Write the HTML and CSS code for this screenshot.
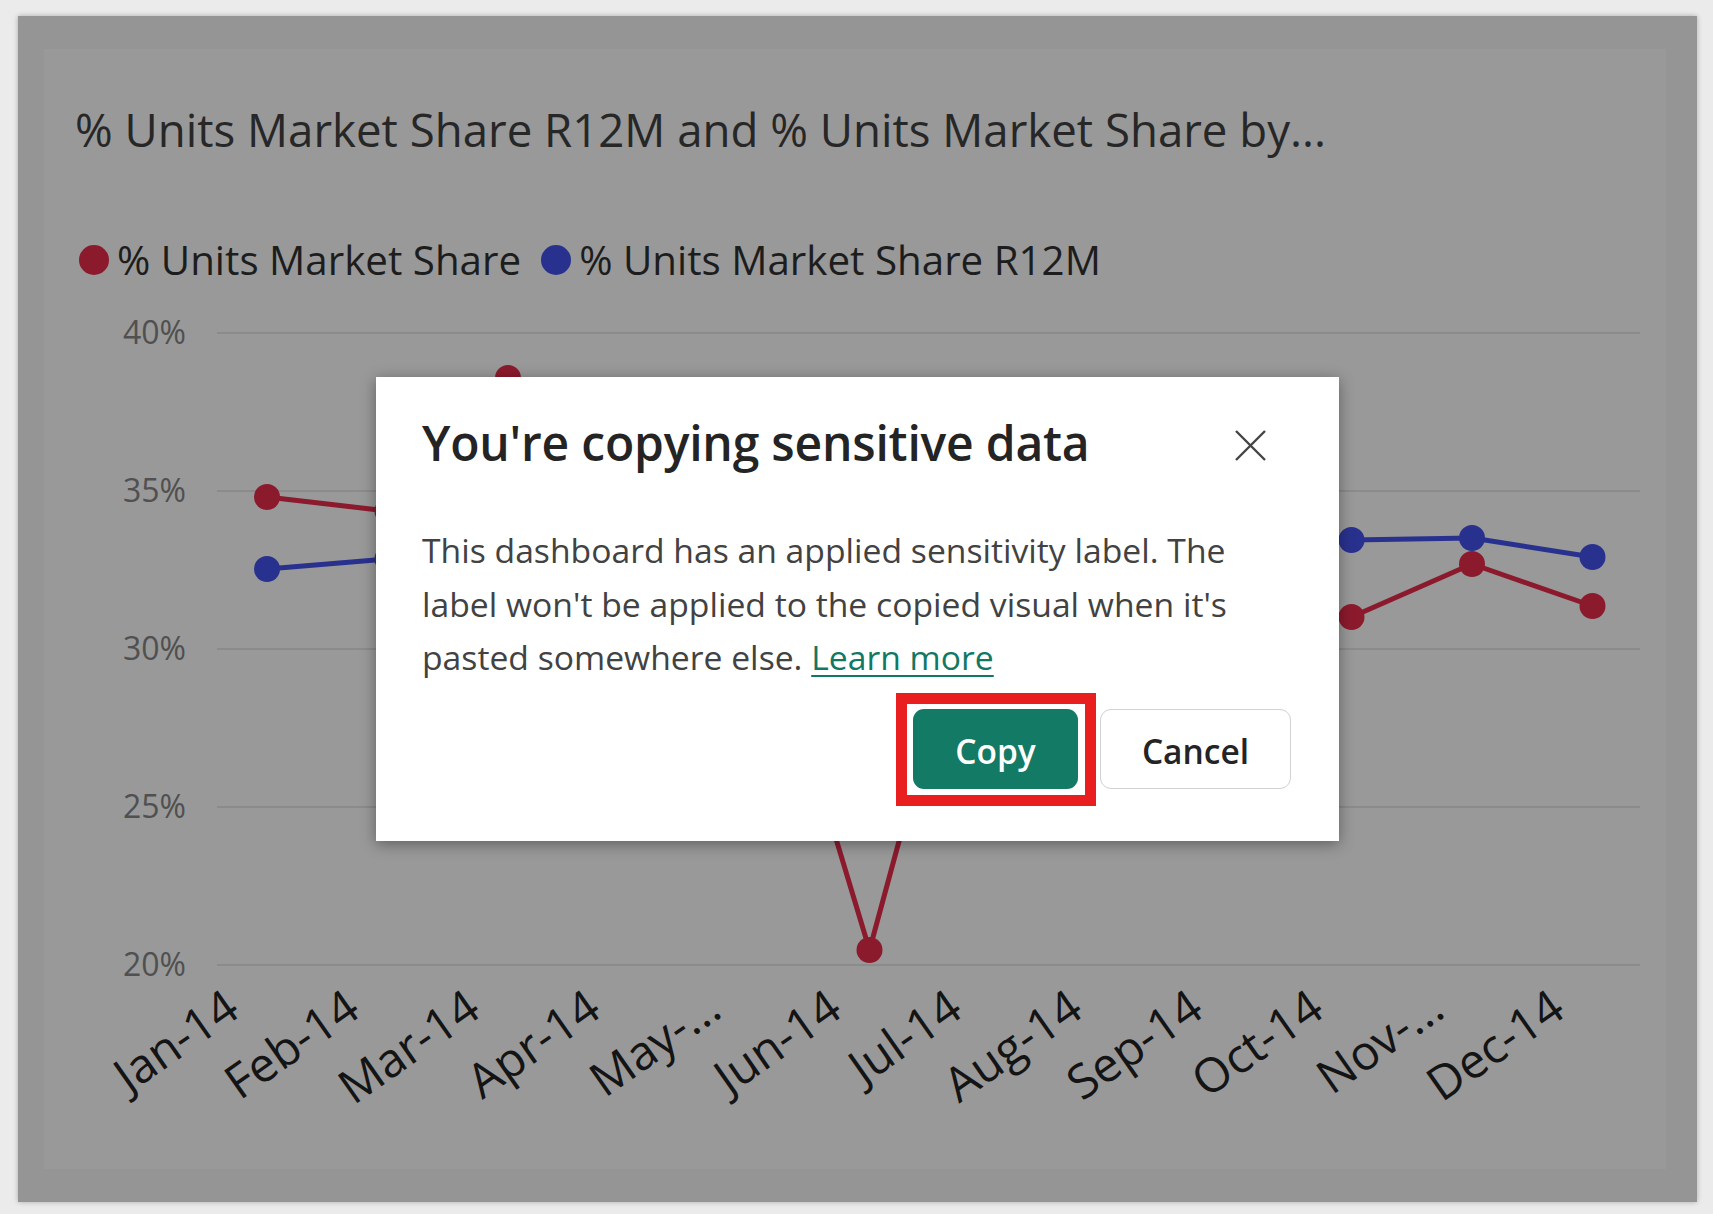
FILE: index.html
```html
<!DOCTYPE html>
<html lang="en">
<head>
<meta charset="utf-8">
<title>Copy visual</title>
<link rel="stylesheet" href="styles.css">
</head>
<body>
<div class="card">
  <div class="visual">
    <h1 class="vtitle">% Units Market Share R12M and % Units Market Share by...</h1>
    <div class="legend">
      <span class="dot dot-red"></span><span class="ltext">% Units Market Share</span>
      <span class="dot dot-blue"></span><span class="ltext">% Units Market Share R12M</span>
    </div>
    <svg class="plot" viewBox="44 285 1622 884" width="1622" height="884" xmlns="http://www.w3.org/2000/svg">
      <g class="grid">
        <line x1="217" x2="1640" y1="333" y2="333"/>
        <line x1="217" x2="1640" y1="491" y2="491"/>
        <line x1="217" x2="1640" y1="649" y2="649"/>
        <line x1="217" x2="1640" y1="807" y2="807"/>
        <line x1="217" x2="1640" y1="965" y2="965"/>
      </g>
      <g class="ylab">
        <text x="186" y="344">40%</text>
        <text x="186" y="502">35%</text>
        <text x="186" y="660">30%</text>
        <text x="186" y="818">25%</text>
        <text x="186" y="976">20%</text>
      </g>
      <g class="series red">
        <polyline points="267,497 387.5,511 508,378 628.5,430 749,550 869.5,950 990,506 1110.5,520 1231,600 1351.5,617 1472,564 1592.5,606"/>
        <circle cx="267" cy="497" r="13"/><circle cx="387.5" cy="511" r="13"/><circle cx="508" cy="378" r="13"/>
        <circle cx="628.5" cy="430" r="13"/><circle cx="749" cy="550" r="13"/><circle cx="869.5" cy="950" r="13"/>
        <circle cx="990" cy="506" r="13"/><circle cx="1110.5" cy="520" r="13"/><circle cx="1231" cy="600" r="13"/>
        <circle cx="1351.5" cy="617" r="13"/><circle cx="1472" cy="564" r="13"/><circle cx="1592.5" cy="606" r="13"/>
      </g>
      <g class="series blue">
        <polyline points="267,569 387.5,559 508,555 628.5,552 749,550 869.5,548 990,545 1110.5,543 1231,541 1351.5,540 1472,538 1592.5,557"/>
        <circle cx="267" cy="569" r="13"/><circle cx="387.5" cy="559" r="13"/><circle cx="508" cy="555" r="13"/>
        <circle cx="628.5" cy="552" r="13"/><circle cx="749" cy="550" r="13"/><circle cx="869.5" cy="548" r="13"/>
        <circle cx="990" cy="545" r="13"/><circle cx="1110.5" cy="543" r="13"/><circle cx="1231" cy="541" r="13"/>
        <circle cx="1351.5" cy="540" r="13"/><circle cx="1472" cy="538" r="13"/><circle cx="1592.5" cy="557" r="13"/>
      </g>
      <g class="xlab">
        <text x="242" y="1015" transform="rotate(-35 242 1015)">Jan-14</text>
        <text x="362.5" y="1015" transform="rotate(-35 362.5 1015)">Feb-14</text>
        <text x="483" y="1015" transform="rotate(-35 483 1015)">Mar-14</text>
        <text x="603.5" y="1015" transform="rotate(-35 603.5 1015)">Apr-14</text>
        <text x="724" y="1015" transform="rotate(-35 724 1015)">May-...</text>
        <text x="844.5" y="1015" transform="rotate(-35 844.5 1015)">Jun-14</text>
        <text x="965" y="1015" transform="rotate(-35 965 1015)">Jul-14</text>
        <text x="1085.5" y="1015" transform="rotate(-35 1085.5 1015)">Aug-14</text>
        <text x="1206" y="1015" transform="rotate(-35 1206 1015)">Sep-14</text>
        <text x="1326.5" y="1015" transform="rotate(-35 1326.5 1015)">Oct-14</text>
        <text x="1447" y="1015" transform="rotate(-35 1447 1015)">Nov-...</text>
        <text x="1567.5" y="1015" transform="rotate(-35 1567.5 1015)">Dec-14</text>
      </g>
    </svg>
  </div>

  <div class="dialog" role="dialog" aria-labelledby="dlg-title">
    <div class="dialog-head">
      <h2 id="dlg-title" class="dialog-title">You're copying sensitive data</h2>
      <button class="close" aria-label="Close">
        <svg width="31" height="31" viewBox="0 0 31 31"><path d="M1 1 L30 30 M30 1 L1 30" stroke="#444444" stroke-width="2.4" fill="none"/></svg>
      </button>
    </div>
    <p class="dialog-body">This dashboard has an applied sensitivity label. The<br>label won't be applied to the copied visual when it's<br>pasted somewhere else. <a href="#" class="link">Learn more</a></p>
    <div class="actions">
      <span class="copy-wrap"><button class="btn btn-primary">Copy</button><span class="highlight"></span></span>
      <button class="btn btn-secondary">Cancel</button>
    </div>
  </div>
</div>
</body>
</html>
```
FILE: styles.css
```css
* { box-sizing: border-box; }
html, body { margin: 0; padding: 0; }
body {
  background: #ebebeb;
  font-family: "Open Sans", "Noto Sans", sans-serif;
  width: 1713px;
  height: 1214px;
  overflow: hidden;
}
.card {
  position: relative;
  margin: 16px 0 0 18px;
  width: 1679px;
  height: 1186px;
  padding: 33px 31px 33px 26px;
  background: #959595;
  box-shadow: 0 0 5px rgba(0, 0, 0, 0.28);
}
.visual {
  width: 1622px;
  height: 1120px;
  padding-top: 50px;
  background: #999999;
}
.vtitle {
  margin: 0;
  padding-left: 31px;
  font-size: 45.6px;
  line-height: 60px;
  font-weight: 400;
  color: #272727;
  white-space: nowrap;
}
.legend {
  margin-top: 76px;
  height: 50px;
  padding-left: 35px;
  display: flex;
  align-items: center;
  font-size: 40.3px;
  line-height: 50px;
  color: #1d1d1d;
  white-space: nowrap;
}
.dot {
  width: 30px;
  height: 30px;
  border-radius: 50%;
  flex: none;
}
.dot-red { background: #8c1a2d; }
.dot-blue { background: #29318f; margin-left: 20px; }
.ltext { margin-left: 8px; }
.plot { display: block; }
.grid line { stroke: #8b8b8b; stroke-width: 2; }
.ylab text {
  font-family: "Open Sans", sans-serif;
  font-size: 32px;
  fill: #505050;
  text-anchor: end;
}
.series polyline { fill: none; stroke-width: 5; stroke-linejoin: round; }
.red polyline { stroke: #8c1a2d; }
.red circle { fill: #8c1a2d; }
.blue polyline { stroke: #29318f; }
.blue circle { fill: #29318f; }
.xlab text {
  font-family: "Open Sans", sans-serif;
  font-size: 47.5px;
  fill: #141414;
  text-anchor: end;
}

.dialog {
  position: absolute;
  left: 358px;
  top: 361px;
  width: 963px;
  height: 464px;
  padding: 34px 48px 51px 46px;
  background: #ffffff;
  box-shadow: 0 3px 14px rgba(0, 0, 0, 0.38);
}
.dialog-head {
  display: flex;
  align-items: center;
  justify-content: space-between;
}
.dialog-title {
  margin: 0;
  font-size: 48px;
  line-height: 64px;
  font-weight: 600;
  color: #242424;
  letter-spacing: -0.2px;
}
.close {
  width: 48px;
  height: 48px;
  margin-right: 17px;
  margin-top: 4px;
  padding: 0;
  border: 0;
  background: transparent;
  display: flex;
  align-items: center;
  justify-content: center;
}
.close svg { display: block; }
.dialog-body {
  margin: 49px 0 0;
  font-size: 33.7px;
  line-height: 53.5px;
  color: #424242;
  white-space: nowrap;
}
.link {
  color: #117865;
  text-decoration: underline;
  text-decoration-thickness: 2px;
  text-underline-offset: 5px;
}
.actions {
  margin-top: 24px;
  display: flex;
  justify-content: flex-end;
  gap: 22px;
}
.copy-wrap { position: relative; display: block; }
.btn {
  display: block;
  height: 80px;
  border-radius: 11px;
  font-family: "Open Sans", sans-serif;
  font-size: 33.5px;
  font-weight: 600;
  padding: 5px 0 0;
}
.btn-primary {
  width: 165px;
  background: #137a65;
  color: #ffffff;
  border: 0;
}
.btn-secondary {
  width: 191px;
  background: #ffffff;
  color: #242424;
  border: 1.5px solid #d1d1d1;
}
.highlight {
  position: absolute;
  left: -17px;
  top: -16px;
  right: -18px;
  bottom: -17px;
  border: 11px solid #e81e1f;
  pointer-events: none;
}
```
